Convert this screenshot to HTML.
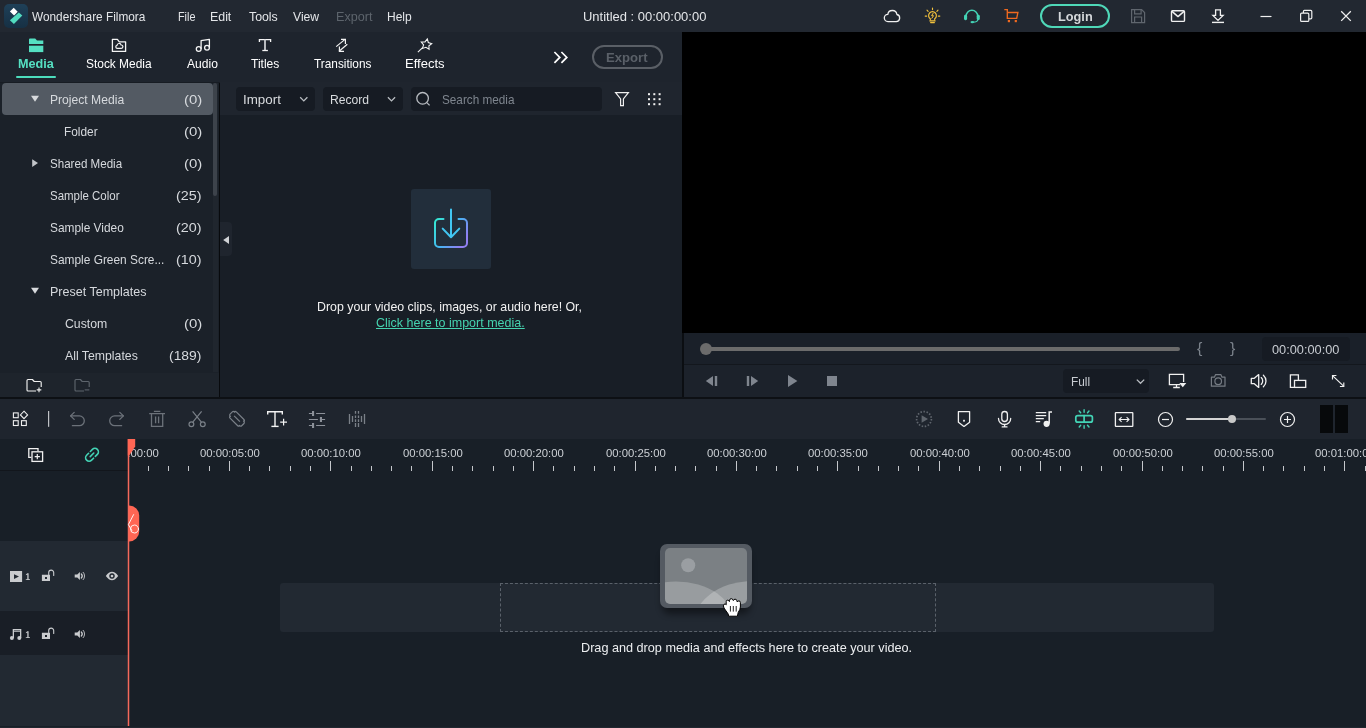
<!DOCTYPE html>
<html><head><meta charset="utf-8"><title>Wondershare Filmora</title>
<style>
html,body{margin:0;padding:0;background:#181e26;}
body{width:1366px;height:728px;overflow:hidden;position:relative;font-family:"Liberation Sans", sans-serif;}
#app{position:absolute;left:0;top:0;width:1366px;height:728px;overflow:hidden;}
#app>div{position:absolute;}
.t{position:absolute;white-space:pre;font-family:"Liberation Sans", sans-serif;transform-origin:0 0;}
#ruler{position:absolute;left:128px;top:439px;width:1238px;height:32px;overflow:hidden;}
#ruler>div{position:absolute;left:-128px;top:-439px;width:1366px;height:728px;}
#ruler i{position:absolute;width:1px;background:#c4c7cb;display:block;}
svg{position:absolute;overflow:visible;}
</style></head><body>
<div id="app">
<div style="left:0px;top:0px;width:1366px;height:32px;background:#222831;"></div>
<div style="left:0px;top:32px;width:682px;height:50px;background:#1e242d;"></div>
<div style="left:0px;top:82px;width:219px;height:291px;background:#1b2129;"></div>
<div style="left:213px;top:82px;width:5px;height:290px;background:#20262e;"></div>
<div style="left:2px;top:83px;width:211px;height:32px;background:#535a63;border-radius:4px;"></div>
<div style="left:213px;top:83px;width:4px;height:113px;background:#3d434b;border-radius:2px;"></div>
<div style="left:0px;top:373px;width:219px;height:24px;background:#1e242c;"></div>
<div style="left:219px;top:82px;width:1px;height:315px;background:#080a0d;"></div>
<div style="left:0px;top:82px;width:682px;height:1px;background:#171c23;"></div>
<div style="left:220px;top:82px;width:462px;height:33px;background:#1f252e;"></div>
<div style="left:220px;top:115px;width:462px;height:282px;background:#181e26;"></div>
<div style="left:220px;top:222px;width:12px;height:34px;background:#1f252e;border-radius:0 4px 4px 0;"></div>
<div style="left:236px;top:87px;width:79px;height:24px;background:#161b23;border-radius:4px;"></div>
<div style="left:323px;top:87px;width:80px;height:24px;background:#161b23;border-radius:4px;"></div>
<div style="left:411px;top:87px;width:191px;height:24px;background:#161b23;border-radius:4px;"></div>
<div style="left:411px;top:189px;width:80px;height:80px;background:#222e3b;border-radius:3px;"></div>
<div style="left:16px;top:76px;width:40px;height:2px;background:#4cdcbc;border-radius:1px;"></div>
<div style="left:682px;top:32px;width:684px;height:301px;background:#000;"></div>
<div style="left:682px;top:333px;width:2px;height:64px;background:#0b0e12;"></div>
<div style="left:684px;top:333px;width:682px;height:31px;background:#1a2029;"></div>
<div style="left:684px;top:364px;width:682px;height:1px;background:#13171d;"></div>
<div style="left:684px;top:365px;width:682px;height:32px;background:#1c222b;"></div>
<div style="left:706px;top:347px;width:474px;height:4px;background:#6b6b6b;border-radius:2px;"></div>
<div style="left:700px;top:343px;width:12px;height:12px;background:#6b6b6b;border-radius:50%;"></div>
<div style="left:1262px;top:337px;width:88px;height:24px;background:#161b23;border-radius:4px;"></div>
<div style="left:1063px;top:369px;width:86px;height:24px;background:#161b23;border-radius:4px;"></div>
<div style="left:0px;top:397px;width:1366px;height:2px;background:#0d1014;"></div>
<div style="left:0px;top:399px;width:1366px;height:40px;background:#1f252e;"></div>
<div style="left:0px;top:439px;width:1366px;height:289px;background:#181f27;"></div>
<div style="left:0px;top:439px;width:1366px;height:31px;background:#181f27;"></div>
<div style="left:0px;top:470px;width:128px;height:1px;background:#12161c;"></div>
<div style="left:0px;top:541px;width:128px;height:70px;background:#222932;"></div>
<div style="left:0px;top:611px;width:128px;height:44px;background:#191e26;"></div>
<div style="left:0px;top:655px;width:128px;height:71px;background:#222932;"></div>
<div style="left:0px;top:726.5px;width:1366px;height:1.5px;background:#212730;"></div>
<div style="left:280px;top:583px;width:934px;height:49px;background:#222932;border-radius:3px;"></div>
<div style="left:500px;top:583px;width:436px;height:49px;background:transparent;border:1px dashed #5a616a;box-sizing:border-box;"></div>
<div style="left:1186px;top:418px;width:80px;height:2px;background:#4a5058;border-radius:1px;"></div>
<div style="left:1186px;top:418px;width:46px;height:2px;background:#d4d4d4;border-radius:1px;"></div>
<div style="left:1228px;top:415px;width:8px;height:8px;background:#c9c9c9;border-radius:50%;"></div>
<div style="left:1320px;top:405px;width:13px;height:28px;background:#07090b;"></div>
<div style="left:1335px;top:405px;width:13px;height:28px;background:#07090b;"></div>
<div style="left:592px;top:45px;width:71px;height:24px;background:transparent;border:2px solid #5a5f66;border-radius:12px;box-sizing:border-box;"></div>
<div style="left:1040px;top:4px;width:70px;height:24px;background:transparent;border:2px solid #4fd8b8;border-radius:12px;box-sizing:border-box;"></div>
<span class="t" style="left:32.10px;top:10.10px;font-size:13.4px;line-height:13.4px;transform:scaleX(0.8821);color:#e4e6e9;font-weight:normal;">Wondershare Filmora</span>
<span class="t" style="left:177.55px;top:10.10px;font-size:13.4px;line-height:13.4px;transform:scaleX(0.8099);color:#e4e6e9;font-weight:normal;">File</span>
<span class="t" style="left:210.43px;top:10.10px;font-size:13.4px;line-height:13.4px;transform:scaleX(0.9235);color:#e4e6e9;font-weight:normal;">Edit</span>
<span class="t" style="left:248.81px;top:10.10px;font-size:13.4px;line-height:13.4px;transform:scaleX(0.9200);color:#e4e6e9;font-weight:normal;">Tools</span>
<span class="t" style="left:293.40px;top:10.10px;font-size:13.4px;line-height:13.4px;transform:scaleX(0.9080);color:#e4e6e9;font-weight:normal;">View</span>
<span class="t" style="left:335.51px;top:10.10px;font-size:13.4px;line-height:13.4px;transform:scaleX(0.9410);color:#5d646c;font-weight:normal;">Export</span>
<span class="t" style="left:387.36px;top:10.10px;font-size:13.4px;line-height:13.4px;transform:scaleX(0.8972);color:#e4e6e9;font-weight:normal;">Help</span>
<span class="t" style="left:583.49px;top:10.10px;font-size:13.4px;line-height:13.4px;transform:scaleX(0.9689);color:#e4e6e9;font-weight:normal;">Untitled : 00:00:00:00</span>
<span class="t" style="left:1057.60px;top:10.10px;font-size:13.4px;line-height:13.4px;transform:scaleX(0.9520);color:#d4d7da;font-weight:bold;">Login</span>
<span class="t" style="left:17.91px;top:57.10px;font-size:13.4px;line-height:13.4px;transform:scaleX(0.9430);color:#55e0c2;font-weight:bold;">Media</span>
<span class="t" style="left:86.13px;top:57.10px;font-size:13.4px;line-height:13.4px;transform:scaleX(0.8897);color:#ffffff;font-weight:normal;">Stock Media</span>
<span class="t" style="left:187.40px;top:57.10px;font-size:13.4px;line-height:13.4px;transform:scaleX(0.9013);color:#ffffff;font-weight:normal;">Audio</span>
<span class="t" style="left:251.21px;top:57.10px;font-size:13.4px;line-height:13.4px;transform:scaleX(0.9000);color:#ffffff;font-weight:normal;">Titles</span>
<span class="t" style="left:313.92px;top:57.10px;font-size:13.4px;line-height:13.4px;transform:scaleX(0.8834);color:#ffffff;font-weight:normal;">Transitions</span>
<span class="t" style="left:405.08px;top:57.10px;font-size:13.4px;line-height:13.4px;transform:scaleX(0.9732);color:#ffffff;font-weight:normal;">Effects</span>
<span class="t" style="left:606.48px;top:51.10px;font-size:13.4px;line-height:13.4px;transform:scaleX(0.9799);color:#5a6068;font-weight:bold;">Export</span>
<span class="t" style="left:49.55px;top:93.10px;font-size:13.4px;line-height:13.4px;transform:scaleX(0.9054);color:#d6d9dd;font-weight:normal;">Project Media</span>
<span class="t" style="left:183.70px;top:93.10px;font-size:13.4px;line-height:13.4px;transform:scaleX(1.1159);color:#d6d9dd;font-weight:normal;">(0)</span>
<span class="t" style="left:64.37px;top:125.10px;font-size:13.4px;line-height:13.4px;transform:scaleX(0.8869);color:#d6d9dd;font-weight:normal;">Folder</span>
<span class="t" style="left:183.70px;top:125.10px;font-size:13.4px;line-height:13.4px;transform:scaleX(1.1159);color:#d6d9dd;font-weight:normal;">(0)</span>
<span class="t" style="left:50.14px;top:157.10px;font-size:13.4px;line-height:13.4px;transform:scaleX(0.8653);color:#d6d9dd;font-weight:normal;">Shared Media</span>
<span class="t" style="left:183.70px;top:157.10px;font-size:13.4px;line-height:13.4px;transform:scaleX(1.1159);color:#d6d9dd;font-weight:normal;">(0)</span>
<span class="t" style="left:50.14px;top:189.10px;font-size:13.4px;line-height:13.4px;transform:scaleX(0.8563);color:#d6d9dd;font-weight:normal;">Sample Color</span>
<span class="t" style="left:176.43px;top:189.10px;font-size:13.4px;line-height:13.4px;transform:scaleX(1.0707);color:#d6d9dd;font-weight:normal;">(25)</span>
<span class="t" style="left:50.13px;top:221.10px;font-size:13.4px;line-height:13.4px;transform:scaleX(0.8878);color:#d6d9dd;font-weight:normal;">Sample Video</span>
<span class="t" style="left:176.43px;top:221.10px;font-size:13.4px;line-height:13.4px;transform:scaleX(1.0707);color:#d6d9dd;font-weight:normal;">(20)</span>
<span class="t" style="left:50.13px;top:253.10px;font-size:13.4px;line-height:13.4px;transform:scaleX(0.8883);color:#d6d9dd;font-weight:normal;">Sample Green Scre...</span>
<span class="t" style="left:176.43px;top:253.10px;font-size:13.4px;line-height:13.4px;transform:scaleX(1.0707);color:#d6d9dd;font-weight:normal;">(10)</span>
<span class="t" style="left:49.52px;top:285.10px;font-size:13.4px;line-height:13.4px;transform:scaleX(0.9348);color:#d6d9dd;font-weight:normal;">Preset Templates</span>
<span class="t" style="left:64.72px;top:317.10px;font-size:13.4px;line-height:13.4px;transform:scaleX(0.9165);color:#d6d9dd;font-weight:normal;">Custom</span>
<span class="t" style="left:183.70px;top:317.10px;font-size:13.4px;line-height:13.4px;transform:scaleX(1.1159);color:#d6d9dd;font-weight:normal;">(0)</span>
<span class="t" style="left:65.30px;top:349.10px;font-size:13.4px;line-height:13.4px;transform:scaleX(0.9171);color:#d6d9dd;font-weight:normal;">All Templates</span>
<span class="t" style="left:169.45px;top:349.10px;font-size:13.4px;line-height:13.4px;transform:scaleX(1.0380);color:#d6d9dd;font-weight:normal;">(189)</span>
<span class="t" style="left:243.06px;top:93.10px;font-size:13.4px;line-height:13.4px;transform:scaleX(0.9980);color:#d8dbde;font-weight:normal;">Import</span>
<span class="t" style="left:330.05px;top:93.10px;font-size:13.4px;line-height:13.4px;transform:scaleX(0.9059);color:#d8dbde;font-weight:normal;">Record</span>
<span class="t" style="left:442.13px;top:93.10px;font-size:13.4px;line-height:13.4px;transform:scaleX(0.8768);color:#7e858e;font-weight:normal;">Search media</span>
<span class="t" style="left:316.60px;top:301.10px;font-size:12.4px;line-height:12.4px;transform:scaleX(0.9968);color:#f2f2f2;font-weight:normal;">Drop your video clips, images, or audio here! Or,</span>
<span class="t" style="left:376.29px;top:317.10px;font-size:12.4px;line-height:12.4px;transform:scaleX(1.0091);color:#45d4b0;font-weight:normal;text-decoration:underline;text-underline-offset:1px;">Click here to import media.</span>
<span class="t" style="left:1197.35px;top:341.05px;font-size:14.5px;line-height:14.5px;transform:scaleX(1.1034);color:#7b828b;font-weight:normal;">{</span>
<span class="t" style="left:1229.95px;top:341.05px;font-size:14.5px;line-height:14.5px;transform:scaleX(1.1034);color:#7b828b;font-weight:normal;">}</span>
<span class="t" style="left:1272.30px;top:343.10px;font-size:13.4px;line-height:13.4px;transform:scaleX(0.9538);color:#c8ccd2;font-weight:normal;">00:00:00:00</span>
<span class="t" style="left:1071.07px;top:375.10px;font-size:13.4px;line-height:13.4px;transform:scaleX(0.8850);color:#c8ccd2;font-weight:normal;">Full</span>
<span class="t" style="left:580.88px;top:642.10px;font-size:12.4px;line-height:12.4px;transform:scaleX(1.0213);color:#eceef0;font-weight:normal;">Drag and drop media and effects here to create your video.</span>
<div id="ruler"><div>
<span class="t" style="left:98.91px;top:447.55px;font-size:11.5px;line-height:11.5px;transform:scaleX(0.9849);color:#ccd0d5;font-weight:normal;">00:00:00:00</span>
<span class="t" style="left:199.91px;top:447.55px;font-size:11.5px;line-height:11.5px;transform:scaleX(0.9849);color:#ccd0d5;font-weight:normal;">00:00:05:00</span>
<span class="t" style="left:300.91px;top:447.55px;font-size:11.5px;line-height:11.5px;transform:scaleX(0.9849);color:#ccd0d5;font-weight:normal;">00:00:10:00</span>
<span class="t" style="left:402.91px;top:447.55px;font-size:11.5px;line-height:11.5px;transform:scaleX(0.9849);color:#ccd0d5;font-weight:normal;">00:00:15:00</span>
<span class="t" style="left:503.91px;top:447.55px;font-size:11.5px;line-height:11.5px;transform:scaleX(0.9849);color:#ccd0d5;font-weight:normal;">00:00:20:00</span>
<span class="t" style="left:605.91px;top:447.55px;font-size:11.5px;line-height:11.5px;transform:scaleX(0.9849);color:#ccd0d5;font-weight:normal;">00:00:25:00</span>
<span class="t" style="left:706.91px;top:447.55px;font-size:11.5px;line-height:11.5px;transform:scaleX(0.9849);color:#ccd0d5;font-weight:normal;">00:00:30:00</span>
<span class="t" style="left:807.91px;top:447.55px;font-size:11.5px;line-height:11.5px;transform:scaleX(0.9849);color:#ccd0d5;font-weight:normal;">00:00:35:00</span>
<span class="t" style="left:909.91px;top:447.55px;font-size:11.5px;line-height:11.5px;transform:scaleX(0.9849);color:#ccd0d5;font-weight:normal;">00:00:40:00</span>
<span class="t" style="left:1010.91px;top:447.55px;font-size:11.5px;line-height:11.5px;transform:scaleX(0.9849);color:#ccd0d5;font-weight:normal;">00:00:45:00</span>
<span class="t" style="left:1112.91px;top:447.55px;font-size:11.5px;line-height:11.5px;transform:scaleX(0.9849);color:#ccd0d5;font-weight:normal;">00:00:50:00</span>
<span class="t" style="left:1213.91px;top:447.55px;font-size:11.5px;line-height:11.5px;transform:scaleX(0.9849);color:#ccd0d5;font-weight:normal;">00:00:55:00</span>
<span class="t" style="left:1314.91px;top:447.55px;font-size:11.5px;line-height:11.5px;transform:scaleX(0.9849);color:#ccd0d5;font-weight:normal;">00:01:00:00</span>
<i style="left:148px;top:466px;height:5px"></i><i style="left:168px;top:466px;height:5px"></i><i style="left:188px;top:466px;height:5px"></i><i style="left:209px;top:466px;height:5px"></i><i style="left:229px;top:461px;height:10px"></i><i style="left:249px;top:466px;height:5px"></i><i style="left:269px;top:466px;height:5px"></i><i style="left:290px;top:466px;height:5px"></i><i style="left:310px;top:466px;height:5px"></i><i style="left:330px;top:461px;height:10px"></i><i style="left:351px;top:466px;height:5px"></i><i style="left:371px;top:466px;height:5px"></i><i style="left:391px;top:466px;height:5px"></i><i style="left:411px;top:466px;height:5px"></i><i style="left:432px;top:461px;height:10px"></i><i style="left:452px;top:466px;height:5px"></i><i style="left:472px;top:466px;height:5px"></i><i style="left:493px;top:466px;height:5px"></i><i style="left:513px;top:466px;height:5px"></i><i style="left:533px;top:461px;height:10px"></i><i style="left:553px;top:466px;height:5px"></i><i style="left:574px;top:466px;height:5px"></i><i style="left:594px;top:466px;height:5px"></i><i style="left:614px;top:466px;height:5px"></i><i style="left:635px;top:461px;height:10px"></i><i style="left:655px;top:466px;height:5px"></i><i style="left:675px;top:466px;height:5px"></i><i style="left:695px;top:466px;height:5px"></i><i style="left:716px;top:466px;height:5px"></i><i style="left:736px;top:461px;height:10px"></i><i style="left:756px;top:466px;height:5px"></i><i style="left:776px;top:466px;height:5px"></i><i style="left:797px;top:466px;height:5px"></i><i style="left:817px;top:466px;height:5px"></i><i style="left:837px;top:461px;height:10px"></i><i style="left:858px;top:466px;height:5px"></i><i style="left:878px;top:466px;height:5px"></i><i style="left:898px;top:466px;height:5px"></i><i style="left:918px;top:466px;height:5px"></i><i style="left:939px;top:461px;height:10px"></i><i style="left:959px;top:466px;height:5px"></i><i style="left:979px;top:466px;height:5px"></i><i style="left:1000px;top:466px;height:5px"></i><i style="left:1020px;top:466px;height:5px"></i><i style="left:1040px;top:461px;height:10px"></i><i style="left:1060px;top:466px;height:5px"></i><i style="left:1081px;top:466px;height:5px"></i><i style="left:1101px;top:466px;height:5px"></i><i style="left:1121px;top:466px;height:5px"></i><i style="left:1142px;top:461px;height:10px"></i><i style="left:1162px;top:466px;height:5px"></i><i style="left:1182px;top:466px;height:5px"></i><i style="left:1202px;top:466px;height:5px"></i><i style="left:1223px;top:466px;height:5px"></i><i style="left:1243px;top:461px;height:10px"></i><i style="left:1263px;top:466px;height:5px"></i><i style="left:1283px;top:466px;height:5px"></i><i style="left:1304px;top:466px;height:5px"></i><i style="left:1324px;top:466px;height:5px"></i><i style="left:1344px;top:461px;height:10px"></i><i style="left:1365px;top:466px;height:5px"></i>
</div></div>
<svg width="1366" height="728" viewBox="0 0 1366 728" style="left:0;top:0;">
<!-- ===== title bar ===== -->
<defs>
<linearGradient id="lg" x1="0" y1="0" x2="0" y2="1"><stop offset="0" stop-color="#1f4058"/><stop offset="1" stop-color="#163044"/></linearGradient>
<linearGradient id="imp" x1="0" y1="0" x2="1" y2="0.6"><stop offset="0" stop-color="#35ead0"/><stop offset="0.55" stop-color="#45b4f2"/><stop offset="1" stop-color="#9080f2"/></linearGradient>
</defs>
<rect x="4" y="4" width="24" height="24" rx="5" fill="url(#lg)"/>
<polygon points="13.7,7.7 17.7,11.8 14.1,15.4 9.9,11.5" fill="#ffffff"/>
<polygon points="18.8,12.4 22.3,15.6 13.9,24.1 9.9,20.2" fill="#52dcc0"/>
<!-- cloud -->
<path d="M888,21.6 A3.6,3.6 0 0 1 887.8,14.4 A4.6,4.6 0 0 1 896.9,14.5 A3.6,3.6 0 0 1 896.2,21.6 Z" fill="none" stroke="#f0f0f0" stroke-width="1.3" stroke-linejoin="round"/>
<!-- bulb -->
<g stroke="#f2c13c" stroke-width="1.15" fill="none" stroke-linecap="round">
<path d="M930.3,20.1 v-1.3 a3.9,3.9 0 1 1 4.4,0 v1.3"/>
<path d="M929.9,20.9 h5.2 M930.6,22.6 h3.8"/>
<path d="M932.5,8 v1.6 M927,10.2 l1.1,1.1 M938,10.2 l-1.1,1.1 M925.2,16.1 h1.5 M938.3,16.1 h1.5"/>
<path d="M933.2,13.2 l-1.6,2.5 h1.9 l-1.6,2.5" stroke-width="1" stroke-linejoin="round"/>
</g>
<!-- headset -->
<g stroke="#43d3b5" fill="none" stroke-width="1.5" stroke-linecap="round">
<path d="M966.1,16 a5.8,5.8 0 0 1 11.6,0"/>
<path d="M977.6,20 q-0.3,2.1 -4.4,2.2" stroke-width="1.2"/>
</g>
<rect x="964" y="14.8" width="3.1" height="5.4" rx="1.4" fill="#43d3b5"/>
<rect x="976.7" y="14.8" width="3.1" height="5.4" rx="1.4" fill="#43d3b5"/>
<ellipse cx="972.3" cy="22.1" rx="1.8" ry="1.2" fill="#43d3b5"/>
<!-- cart -->
<g stroke="#f0691f" fill="none" stroke-width="1.35" stroke-linejoin="miter">
<path d="M1004.3,9.6 h3 v8.8 h9.4 l1.2,-5.9 h-10.6"/>
</g>
<rect x="1007.8" y="20" width="2.2" height="2.2" fill="#f0691f"/>
<rect x="1014.7" y="20" width="2.2" height="2.2" fill="#f0691f"/>
<!-- save (disabled) -->
<g stroke="#60666e" fill="none" stroke-width="1.2" stroke-linejoin="miter">
<path d="M1131.6,9.6 h10 l3,3 v10 h-13 z"/>
<path d="M1134.6,9.6 v4.3 h6.5 v-4.3"/>
<path d="M1134.6,22.6 v-5.6 h7 v5.6"/>
</g>
<!-- mail -->
<g stroke="#f0f0f0" fill="none" stroke-width="1.4" stroke-linejoin="round">
<rect x="1171.5" y="10.8" width="13" height="10.6" rx="1"/>
<path d="M1172,11.4 l6,5.2 l6,-5.2"/>
</g>
<!-- download -->
<g stroke="#f0f0f0" fill="none" stroke-width="1.3" stroke-linejoin="miter">
<path d="M1215.6,9.8 h4.8 v5.6 h2.7 l-5.1,5 l-5.1,-5 h2.7 z"/>
<path d="M1212,22.4 h12" stroke-width="1.4"/>
</g>
<!-- window controls -->
<path d="M1260.5,16.5 h11" stroke="#f0f0f0" stroke-width="1.2"/>
<g stroke="#f0f0f0" fill="none" stroke-width="1.2">
<rect x="1300.6" y="13.2" width="8.2" height="8.2" rx="1"/>
<path d="M1303.4,13 v-1.6 a1,1 0 0 1 1,-1 h6.4 a1,1 0 0 1 1,1 v6.4 a1,1 0 0 1 -1,1 h-1.8"/>
</g>
<path d="M1341.2,11.3 l9.6,9.6 M1350.8,11.3 l-9.6,9.6" stroke="#f0f0f0" stroke-width="1.3"/>

<!-- ===== tabs ===== -->
<!-- media folder (filled teal) -->
<path d="M29,39.6 a1,1 0 0 1 1,-1 h5.2 l1.8,2 h6.3 v3.3 h-14.3 z" fill="#55e0c2"/>
<rect x="29" y="45.7" width="14.3" height="6.4" fill="#55e0c2"/>
<!-- stock media -->
<g stroke="#f4f4f4" fill="none" stroke-width="1.3" stroke-linejoin="round">
<path d="M112.4,39.4 h5 l1.9,2.4 h6.3 v9.6 h-13.2 z"/>
<path d="M117,48.4 a1.6,1.6 0 0 1 0,-3.1 a2.1,2.1 0 0 1 4.1,-0.3 a1.7,1.7 0 0 1 0.2,3.4 z" stroke-width="1.2"/>
</g>
<!-- audio notes -->
<g stroke="#f4f4f4" fill="none" stroke-width="1.3" stroke-linejoin="round">
<circle cx="198.7" cy="49" r="2.4"/><circle cx="207" cy="47.8" r="2.4"/>
<path d="M201.1,49 v-8.4 l8.3,-1.3 v8.5"/>
</g>
<!-- titles T -->
<g stroke="#f4f4f4" fill="none" stroke-width="1.3">
<path d="M259.4,42 v-2.4 h11.2 v2.4"/>
<path d="M265,39.6 v10.8" stroke="#c9ccd0" stroke-width="1.8"/>
<path d="M262.3,50.5 h5.6"/>
</g>
<!-- transitions -->
<g stroke="#f4f4f4" fill="none" stroke-width="1.2" stroke-linecap="butt">
<path d="M336.2,46.6 l8.8,-7.2"/><path d="M341,39.3 h4.4 v4.6"/>
<path d="M347.3,44.2 l-8.2,7"/><path d="M339.4,46.6 v4.7 h4.6"/>
</g>
<!-- effects star wand -->
<g stroke="#f4f4f4" fill="none" stroke-width="1.1" stroke-linejoin="miter">
<path d="M427.3,38.9 l1,3.6 l3.4,1.2 l-2.8,2 l0.2,3.6 l-3.2,-2 l-3.5,1.1 l1.2,-3.5 l-2.3,-2.9 l3.7,-0.1 z"/>
<path d="M422.6,47.6 l-4.7,4.6"/>
</g>
<!-- >> -->
<path d="M554.4,52 l5.4,5.4 l-5.4,5.4 M561.4,52 l5.4,5.4 l-5.4,5.4" stroke="#ffffff" stroke-width="1.7" fill="none"/>

<!-- ===== sidebar ===== -->
<polygon points="31,95.8 39,95.8 35,101.8" fill="#d8dadd"/>
<polygon points="32.2,159.3 32.2,167 38,163.1" fill="#c2c5c9"/>
<polygon points="31,287.8 39,287.8 35,293.8" fill="#d8dadd"/>
<!-- collapse arrow -->
<polygon points="229,236 229,244 223.2,240" fill="#d0d3d6"/>
<!-- new folder -->
<g stroke="#f0f0f0" fill="none" stroke-width="1.15" stroke-linejoin="round">
<path d="M36,391 h-8 a1,1 0 0 1 -1,-1 v-9.5 a1,1 0 0 1 1,-1 h4.4 l1.8,2 h6 a1,1 0 0 1 1,1 v4.4"/>
<path d="M39,387.6 v4.6 M36.7,389.9 h4.6" stroke-width="1.1"/>
</g>
<g stroke="#5d646c" fill="none" stroke-width="1.15" stroke-linejoin="round">
<path d="M84,391 h-8 a1,1 0 0 1 -1,-1 v-9.5 a1,1 0 0 1 1,-1 h4.4 l1.8,2 h6 a1,1 0 0 1 1,1 v4.4"/>
<path d="M84.7,389.9 h4.6" stroke-width="1.1"/>
</g>

<!-- ===== media toolbar ===== -->
<path d="M300.2,97.3 l3.6,3.6 l3.6,-3.6" stroke="#b9bdc2" stroke-width="1.3" fill="none"/>
<path d="M387.9,97.3 l3.6,3.6 l3.6,-3.6" stroke="#b9bdc2" stroke-width="1.3" fill="none"/>
<circle cx="422.6" cy="98.3" r="5.8" stroke="#b9bdc2" stroke-width="1.3" fill="none"/>
<path d="M426.8,102.6 l2.8,2.8" stroke="#b9bdc2" stroke-width="1.3"/>
<path d="M615.6,92.7 h12.8 l-5,6.2 v6.8 h-2.8 v-6.8 z" stroke="#f0f0f0" stroke-width="1.2" fill="none" stroke-linejoin="miter"/>
<g fill="#f0f0f0">
<rect x="648" y="93.2" width="2" height="2"/><rect x="653.3" y="93.2" width="2" height="2"/><rect x="658.6" y="93.2" width="2" height="2"/>
<rect x="648" y="98.2" width="2" height="2"/><rect x="653.3" y="98.2" width="2" height="2"/><rect x="658.6" y="98.2" width="2" height="2"/>
<rect x="648" y="103.2" width="2" height="2"/><rect x="653.3" y="103.2" width="2" height="2"/><rect x="658.6" y="103.2" width="2" height="2"/>
</g>
<!-- import icon -->
<g stroke="url(#imp)" fill="none" stroke-width="2" stroke-linecap="round" stroke-linejoin="round">
<path d="M443.5,219 h-4.5 a4,4 0 0 0 -4,4 v20 a4,4 0 0 0 4,4 h24 a4,4 0 0 0 4,-4 v-20 a4,4 0 0 0 -4,-4 h-4.500"/>
</g>
<g stroke="#42c6f2" fill="none" stroke-width="2" stroke-linecap="round" stroke-linejoin="round">
<path d="M451,209.6 v27.5 M442.7,228.6 l8.3,8.6 l8.3,-8.6"/>
</g>
<!-- ===== preview controls ===== -->
<g fill="#7f858e">
<polygon points="713,376 713,386 705.8,381"/><rect x="714.8" y="376" width="2.4" height="10"/>
<rect x="746.8" y="376" width="2.4" height="10"/><polygon points="751,376 751,386 758.2,381"/>
<polygon points="788,375 788,387 797.4,381"/>
<rect x="827" y="376" width="10" height="10"/>
</g>
<path d="M1136.8,379.6 l3.7,3.7 l3.7,-3.7" stroke="#b9bdc2" stroke-width="1.3" fill="none"/>
<!-- monitor -->
<g stroke="#f0f0f0" fill="none" stroke-width="1.3" stroke-linejoin="miter">
<path d="M1180.6,384.6 h-11.200 v-10.200 h14.200 v7.6"/>
<path d="M1176.5,384.6 v2.8 M1173.2,387.5 h6.600"/>
</g>
<polygon points="1179.3,382.9 1186.3,382.9 1182.8,387.3" fill="#f0f0f0" stroke="#1c222b" stroke-width="0.8" paint-order="stroke"/>
<!-- camera (disabled) -->
<g stroke="#767c84" fill="none" stroke-width="1.2" stroke-linejoin="round">
<path d="M1211.400,377.200 h3 l1.200,-2.600 h5.200 l1.200,2.600 h3 v9 h-13.600 z"/>
<circle cx="1218.200" cy="381.200" r="3.300"/>
</g>
<!-- volume -->
<g stroke="#f0f0f0" fill="none" stroke-width="1.3" stroke-linejoin="round" stroke-linecap="round">
<path d="M1251.300,378.300 h3 l4.400,-3.700 v12.800 l-4.400,-3.700 h-3 z"/>
<path d="M1261.200,377.600 a4.600,4.600 0 0 1 0,6.800"/>
<path d="M1263.400,375.200 a7.800,7.800 0 0 1 0,11.600"/>
</g>
<!-- pip -->
<g stroke="#f0f0f0" fill="none" stroke-width="1.3" stroke-linejoin="miter">
<path d="M1294.200,387.400 h-3.800 v-12.600 h8 v5.200"/>
<rect x="1294.500" y="380.400" width="11.200" height="7"/>
</g>
<!-- fullscreen -->
<g stroke="#f0f0f0" fill="none" stroke-width="1.15">
<path d="M1332.8,375.8 l10.800,10.400"/>
<path d="M1336.400,375.500 h-3.900 v3.900"/><path d="M1339.900,386.500 h3.900 v-3.900"/>
</g>

<!-- ===== timeline toolbar ===== -->
<g stroke="#f0f0f0" fill="none" stroke-width="1.1">
<rect x="13.400" y="412.900" width="4.800" height="4.800"/><rect x="13.400" y="420.700" width="4.800" height="4.800"/><rect x="21.500" y="420.700" width="4.800" height="4.800"/>
<polygon points="24,411.200 27.600,414.900 24,418.600 20.400,414.900"/>
</g>
<rect x="48" y="411" width="1.200" height="15.800" fill="#c0c3c7"/>
<g stroke="#6c727a" fill="none" stroke-width="1.3" stroke-linejoin="round" stroke-linecap="round">
<path d="M74.200,412.400 l-3.600,3.500 l3.600,3.500"/><path d="M70.800,415.900 h8.600 a4.900,4.900 0 0 1 0,9.800 h-7"/>
<path d="M119.800,412.400 l3.600,3.500 l-3.600,3.500"/><path d="M123.200,415.900 h-8.600 a4.900,4.900 0 0 0 0,9.800 h7"/>
</g>
<g stroke="#6c727a" fill="none" stroke-width="1.300">
<path d="M149.200,413.700 h15.800 M153.900,411.400 h6.400"/>
<path d="M151.500,413.700 v12.600 h11.200 v-12.600"/>
<path d="M155.600,416.600 v6.600 M158.600,416.600 v6.600"/>
</g>
<!-- scissors -->
<g stroke="#7a8088" fill="none" stroke-width="1.200">
<circle cx="191.400" cy="424.200" r="2.400"/><circle cx="202.800" cy="424.200" r="2.400"/>
<path d="M192.800,422.200 l8.800,-10.800 M201.400,422.200 l-8.800,-10.800"/>
</g>
<!-- tag -->
<g stroke="#7a8088" fill="none" stroke-width="1.2" stroke-linejoin="round" transform="translate(237,418.8) rotate(45)">
<path d="M-5.4,-4.4 H5.4 Q6.3,-4.4 6.7,-3.8 L6.3,-3 L7.3,-2.9 Q8.2,-2.5 8.2,-1.6 V1.6 Q8.2,2.5 7.3,2.9 L6.3,3 L6.7,3.8 Q6.3,4.4 5.4,4.4 H-5.4 Q-6.3,4.4 -6.7,3.8 L-6.3,3 L-7.3,2.9 Q-8.2,2.5 -8.2,1.6 V-1.6 Q-8.2,-2.5 -7.3,-2.9 L-6.3,-3 L-6.7,-3.8 Q-6.3,-4.4 -5.4,-4.4 Z"/>
<path d="M-4.1,0 H4.1"/>
</g>
<!-- T+ -->
<g stroke="#f4f4f4" fill="none" stroke-width="1.400">
<path d="M267.700,414.400 v-2.700 h14.600 v2.700"/>
<path d="M275,411.700 v14.600"/>
<path d="M271.400,426.400 h7.200"/>
<path d="M283.600,418.800 v6.800 M280.200,422.200 h6.800" stroke-width="1.200"/>
</g>
<!-- sliders -->
<g stroke="#8c9199" fill="none" stroke-width="1.2">
<path d="M308.9,413.5 h3.2 M316.1,413.5 h9"/>
<path d="M308.9,419.5 h9 M322,419.5 h3.1"/>
<path d="M308.9,425.5 h3.2 M316.1,425.5 h9"/>
</g>
<g fill="#8c9199"><rect x="312" y="411" width="2.1" height="5"/><rect x="319.9" y="417" width="2.1" height="5"/><rect x="312" y="423" width="2.1" height="5"/></g>
<!-- wave -->
<g stroke="#7a8088" fill="none" stroke-width="1.3">
<path d="M349.5,414.1 v9.9 M352.5,416 v6 M361.5,416 v6 M364.5,414.1 v9.9"/>
<path d="M355.5,411 v2.7 M355.5,415.4 v2.6 M355.5,419.3 v2.6 M355.5,423 v4"/>
<path d="M358.5,411 v2.7 M358.5,415.4 v2.6 M358.5,419.3 v2.6 M358.5,423 v4"/>
</g>
<!-- render preview -->
<circle cx="924" cy="419" r="7.400" stroke="#5f656d" stroke-width="1.700" fill="none" stroke-dasharray="1.500 1.600"/>
<polygon points="921.600,415.200 921.600,422.800 928,419" fill="#5f656d"/>
<!-- marker -->
<g stroke="#f0f0f0" fill="none" stroke-width="1.300" stroke-linejoin="round">
<path d="M958.400,411.600 h11.200 v10.600 l-5.600,4.200 l-5.600,-4.200 z"/>
</g>
<rect x="963.100" y="419.800" width="1.800" height="1.800" fill="#f0f0f0"/>
<!-- mic -->
<g stroke="#f0f0f0" fill="none" stroke-width="1.300" stroke-linecap="round">
<rect x="1001.800" y="411.500" width="5.600" height="10" rx="2.800"/>
<path d="M998.500,418.400 a6.100,6.100 0 0 0 12.200,0"/>
<path d="M1004.600,424.600 v2.200 M1002.200,426.900 h4.800"/>
</g>
<!-- audio mixer -->
<g stroke="#f0f0f0" fill="none" stroke-width="1.200">
<path d="M1035.800,412.600 h10.400 M1035.800,415.600 h10.400 M1035.800,418.600 h8 M1035.800,421.600 h4.400"/>
<path d="M1049.200,423.600 v-11.600 h2.800" stroke-width="1.500"/>
</g>
<circle cx="1046.600" cy="423.800" r="3.100" fill="#f0f0f0"/>
<!-- auto ripple (teal) -->
<g stroke="#43d3b5" fill="none" stroke-width="1.700" stroke-linecap="round">
<rect x="1075.800" y="415.600" width="16.600" height="6.600" rx="2"/>
<path d="M1084.100,415.600 v6.600"/>
<path d="M1084.100,409.700 v2.600 M1084.100,425.600 v2.600 M1079.200,411 l1.500,1.800 M1089,411 l-1.500,1.800 M1079.200,427 l1.500,-1.800 M1089,427 l-1.500,-1.800" stroke-width="1.400"/>
</g>
<!-- fit -->
<g stroke="#f0f0f0" fill="none" stroke-width="1.300">
<rect x="1115.400" y="412.600" width="17.400" height="13.800" rx="0.500"/>
<path d="M1119.200,419.500 h9.800 M1121.600,417.200 l-2.400,2.300 l2.400,2.300 M1126.600,417.200 l2.400,2.300 l-2.400,2.300" stroke-width="1.100"/>
</g>
<!-- zoom -/+ -->
<g stroke="#f0f0f0" fill="none" stroke-width="1.200">
<circle cx="1165.500" cy="419.500" r="7"/><path d="M1162,419.500 h7"/>
<circle cx="1287.500" cy="419.500" r="7"/><path d="M1284,419.500 h7 M1287.500,416 v7"/>
</g>

<!-- ===== ruler header icons ===== -->
<g stroke="#f0f0f0" fill="none" stroke-width="1.300">
<path d="M31.400,457.400 h-2.600 v-8.800 h9.200 v2.600"/>
<rect x="32" y="451.800" width="10.600" height="9.600"/>
<path d="M37.300,454 v5.200 M34.700,456.600 h5.200" stroke-width="1.200"/>
</g>
<g stroke="#43d3b5" fill="none" stroke-width="1.6" stroke-linecap="round" transform="translate(92,454.8) rotate(-45)">
<path d="M1.2,-3.5 H4.1 A3.5,3.5 0 0 1 4.1,3.5 H1.2"/>
<path d="M-1.3,-3.5 H-4.1 A3.5,3.5 0 0 0 -4.1,3.5 H-1.3"/>
<path d="M-2.5,0 H2.5"/>
</g>
<!-- ===== drop card ===== -->
<defs>
<filter id="sh" x="-30%" y="-30%" width="160%" height="180%"><feGaussianBlur stdDeviation="3.5"/></filter>
<clipPath id="cardclip"><rect x="665" y="548" width="82" height="56" rx="5"/></clipPath>
</defs>
<rect x="662" y="552" width="88" height="62" rx="8" fill="#000" opacity="0.45" filter="url(#sh)"/>
<rect x="660" y="544" width="92" height="64" rx="7" fill="#545a62"/>
<rect x="665" y="548" width="82" height="56" rx="5" fill="#7b8084"/>
<g clip-path="url(#cardclip)">
<circle cx="688.2" cy="565.3" r="7" fill="#9a9ea2"/>
<ellipse cx="676" cy="622" rx="58" ry="40.600" fill="#ffffff" opacity="0.22"/>
<ellipse cx="752" cy="628" rx="60" ry="47" fill="#ffffff" opacity="0.235"/>
</g>
<!-- hand cursor -->
<path d="M724,604.3 Q725.4,603.4 726.2,604.8 L726.2,601.6 Q726.2,600.2 727.6,600.2 Q729.2,600.2 729.4,601.6 L729.6,600.2 Q729.8,598.7 731.2,598.7 Q732.8,598.7 733,600.2 L733.4,600.6 Q733.6,599.2 735.1,599.2 Q736.7,599.2 736.9,600.8 L737.3,602 Q737.5,600.9 738.9,600.9 Q740.4,600.9 740.4,602.6 L740.4,607 Q740.2,609.6 738.2,612.4 L737.4,616.2 L728.6,616.2 L728.2,614 L724,608 Q722.8,605.6 724,604.3 Z" fill="#ffffff" stroke="#000000" stroke-width="1" stroke-linejoin="round"/>
<path d="M730.4,606 v5.6 M733.3,606 v5.6 M736.2,606 v5.6" stroke="#222" stroke-width="1"/>

<!-- ===== playhead ===== -->
<rect x="127.750" y="439" width="1.500" height="287" fill="#f5695b"/>
<polygon points="127.750,439 135.200,439 135.200,446.600 129.250,455.400 127.750,455.400" fill="#ff6654"/>
<path d="M129,505.500 h0.200 a10,10 0 0 1 10,10 v16 a10,10 0 0 1 -10,10 h-0.200 z" fill="#ff6654"/>
<g stroke="#ffffff" stroke-width="0.900" fill="none" stroke-linecap="round">
<circle cx="134.500" cy="529" r="4"/>
<path d="M133.600,514.600 l-5.200,10 l3.400,5.800"/>
</g>

<!-- ===== track headers ===== -->
<g fill="#c9cbce">
<path d="M10,570.900 h12.100 v11.200 h-12.100 z M14,574.200 v4.700 l5,-2.350 z" fill-rule="evenodd"/>
<!-- 1 -->
<path d="M27.300,573.300 h1.300 v5.900 h1.400 v0.700 h-4.200 v-0.700 h1.500 v-4.600 l-1.400,0.700 v-0.800 z"/>
<path d="M27.300,631.300 h1.300 v5.900 h1.400 v0.700 h-4.200 v-0.700 h1.500 v-4.600 l-1.400,0.700 v-0.800 z"/>
<!-- lock bodies -->
<path d="M41.900,574.800 h8.100 v6.100 h-8.100 z M45,576.900 h2 v2 h-2 z" fill-rule="evenodd"/>
<path d="M41.900,632.800 h8.100 v6.100 h-8.100 z M45,634.900 h2 v2 h-2 z" fill-rule="evenodd"/>
<!-- speakers -->
<path d="M74.700,574.400 h2.600 l2.600,-2.500 v8.200 l-2.600,-2.500 h-2.600 z"/>
<path d="M74.700,632.400 h2.600 l2.600,-2.500 v8.200 l-2.600,-2.500 h-2.600 z"/>
<!-- eye -->
<path d="M105.800,576 q6.200,-8.400 12.400,0 q-6.200,8.400 -12.400,0 z M112,573.200 a2.800,2.800 0 1 0 0.010,0 z M112,574.700 a1.300,1.300 0 1 1 -0.010,0 z" fill-rule="evenodd"/>
<!-- music note -->
<circle cx="11.900" cy="638.100" r="2"/><circle cx="19.300" cy="638.100" r="2"/>
<path d="M12.700,629 h8.600 v9 h-1.300 v-6.300 h-6 v6.300 h-1.300 z M14,630.300 v0.500 h6 v-0.500 z" fill-rule="evenodd"/>
</g>
<g stroke="#c9cbce" fill="none" stroke-width="1.100" stroke-linecap="round">
<path d="M48.700,574.600 v-2 a2.500,2.500 0 0 1 5,0 v2.800"/>
<path d="M48.700,632.600 v-2 a2.500,2.500 0 0 1 5,0 v2.800"/>
<path d="M81.300,574 a2.900,2.900 0 0 1 0,4" stroke-width="1.300"/><path d="M83.200,572.300 a5.300,5.300 0 0 1 0,7.400" stroke-width="0.900"/>
<path d="M81.300,632 a2.900,2.900 0 0 1 0,4" stroke-width="1.300"/><path d="M83.200,630.300 a5.300,5.300 0 0 1 0,7.400" stroke-width="0.900"/>
</g>
</svg>

</div>
</body></html>
